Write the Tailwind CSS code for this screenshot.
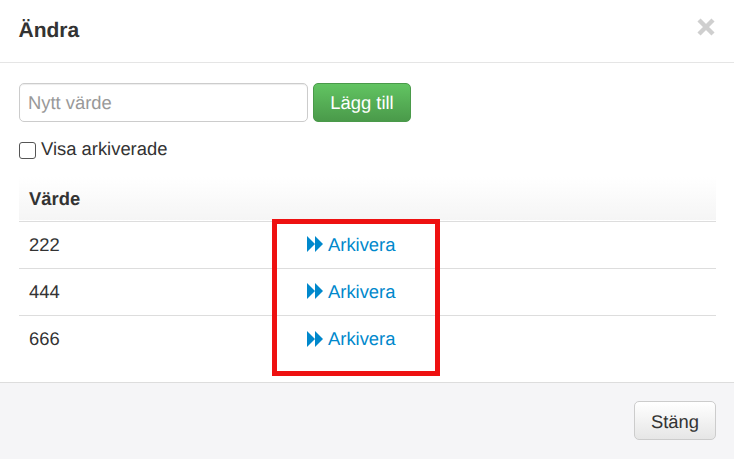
<!DOCTYPE html>
<html><head><meta charset="utf-8"><script src="https://cdn.jsdelivr.net/npm/@tailwindcss/browser@4"></script></head>
<body class="m-0 bg-white font-['Liberation_Sans',sans-serif] text-[#333]">
<div class="relative w-[734px] h-[459px] overflow-hidden flex flex-col bg-white">
  <header class="h-[63px] shrink-0 border-b border-[#e5e5e5] flex items-center justify-between pl-[18.5px] pr-[18px]">
    <h4 class="text-[21px] font-bold leading-none mb-[1px] [text-rendering:geometricPrecision]">Ändra</h4>
    <svg class="w-[20px] h-[20px] mb-[8px]" viewBox="0 0 20 20"><path d="M3 3L17 17M17 3L3 17" stroke="#cfcfcf" stroke-width="4.4"/></svg>
  </header>
  <main class="flex-1 px-[19px] pt-[20px] flex flex-col text-[18.4px] [text-rendering:geometricPrecision]">
    <div class="flex gap-[5px]">
      <input class="w-[289px] h-[39px] border border-[#ccc] rounded-[5px] px-[8px] text-[18.4px] outline-none placeholder:text-[#999] shadow-[inset_0_1px_1px_rgba(0,0,0,0.075)] [text-rendering:geometricPrecision]" placeholder="Nytt värde">
      <button class="w-[98px] h-[39px] rounded-[5px] border border-[#4a9a4a] bg-gradient-to-b from-[#62c462] to-[#4a9a4a] text-white text-[18.4px] [text-rendering:geometricPrecision]">Lägg till</button>
    </div>
    <label class="flex items-center mt-[16px] h-[22px]">
      <span class="block w-[17px] h-[17px] mt-[3px] mr-[5px] border border-[#555] rounded-[3px] bg-white"></span><span>Visa arkiverade</span>
    </label>
    <table class="w-[697px] mt-[17px] border-collapse text-left">
      <thead><tr class="h-[44px] bg-gradient-to-b from-white to-[#f5f5f5] border-b border-[#ddd]"><th class="w-[254px] pl-[10px] font-bold">Värde</th><th></th></tr></thead>
      <tbody>
        <tr class="h-[47px] border-b border-[#ddd]"><td class="pl-[10px]">222</td><td class="pl-[34px]"><a class="flex items-center gap-[5px] text-[#0088cc]"><svg class="w-[16px] h-[16px]" viewBox="0 0 16 16"><path d="M0 0L8 8L0 16ZM8 0L16 8L8 16Z" fill="#0088cc"/></svg>Arkivera</a></td></tr>
        <tr class="h-[47px] border-b border-[#ddd]"><td class="pl-[10px]">444</td><td class="pl-[34px]"><a class="flex items-center gap-[5px] text-[#0088cc]"><svg class="w-[16px] h-[16px]" viewBox="0 0 16 16"><path d="M0 0L8 8L0 16ZM8 0L16 8L8 16Z" fill="#0088cc"/></svg>Arkivera</a></td></tr>
        <tr class="h-[47px]"><td class="pl-[10px]">666</td><td class="pl-[34px]"><a class="flex items-center gap-[5px] text-[#0088cc]"><svg class="w-[16px] h-[16px]" viewBox="0 0 16 16"><path d="M0 0L8 8L0 16ZM8 0L16 8L8 16Z" fill="#0088cc"/></svg>Arkivera</a></td></tr>
      </tbody>
    </table>
  </main>
  <footer class="h-[77px] shrink-0 border-t border-[#ddd] bg-[#f5f5f7] flex justify-end items-start pt-[18px] pr-[18px]">
    <button class="w-[82px] h-[39px] pt-[2px] rounded-[5px] border border-[#ccc] bg-gradient-to-b from-white to-[#e6e6e6] text-[18.4px] text-[#333] [text-rendering:geometricPrecision]">Stäng</button>
  </footer>
  <div class="absolute left-[272px] top-[219px] w-[168px] h-[157px] border-[5px] border-[#ee1111]"></div>
</div>
</body></html>
